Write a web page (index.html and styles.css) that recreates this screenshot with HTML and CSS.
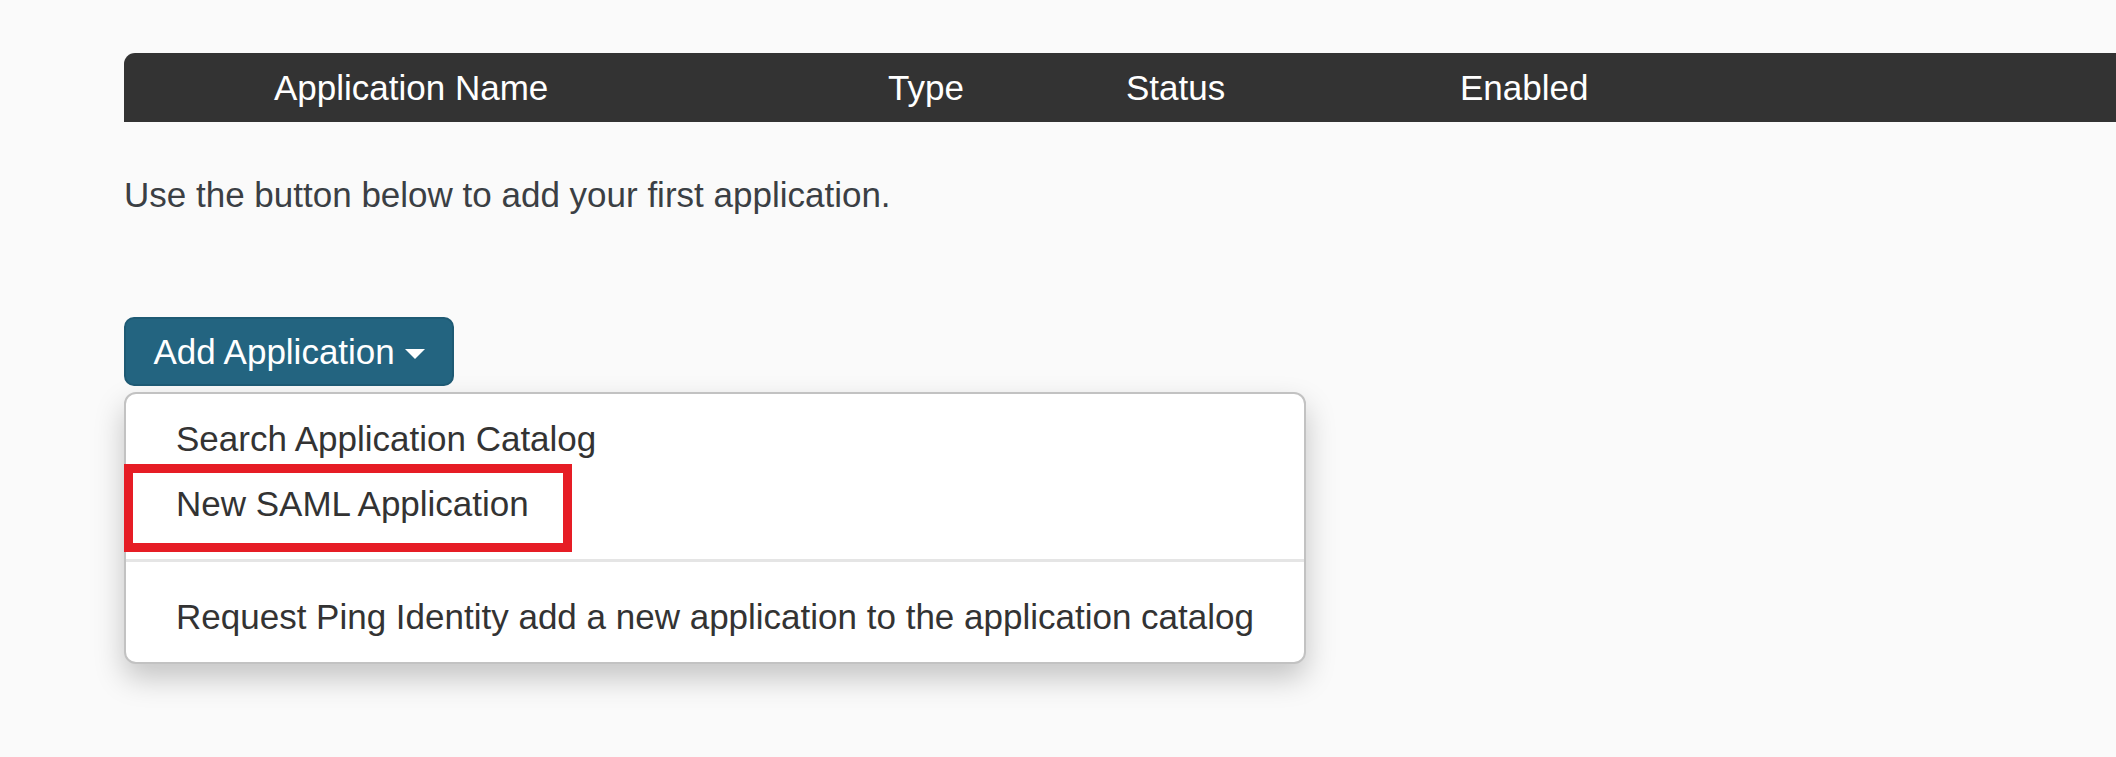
FILE: index.html
```html
<!DOCTYPE html>
<html lang="en">
<head>
    <meta charset="UTF-8">
    <meta name="viewport" content="width=device-width, initial-scale=1.0">
    <title>Applications</title>
    <link rel="stylesheet" href="styles.css">
</head>
<body>
    <div class="page">
        <!-- Applications table (empty) -->
        <div class="app-table">
            <div class="app-table-head">
                <span>Application Name</span>
                <span>Type</span>
                <span>Status</span>
                <span>Enabled</span>
            </div>
        </div>

        <p class="empty-note">Use the button below to add your first application.</p>

        <div class="add-app">
            <button class="add-btn" type="button">Add Application<span class="caret"></span></button>
            <ul class="add-menu">
                <li><a href="#">Search Application Catalog</a></li>
                <li class="marked"><a href="#">New SAML Application</a></li>
                <li class="divider"></li>
                <li><a href="#">Request Ping Identity add a new application to the application catalog</a></li>
            </ul>
        </div>
    </div>
</body>
</html>
```

FILE: styles.css
```css
*,
*::before,
*::after {
    margin: 0;
    padding: 0;
    box-sizing: border-box;
}

html,
body {
    min-height: 100%;
}

body {
    background: #fafafa;
    font-family: 'Liberation Sans', Arial, Helvetica, sans-serif;
    font-size: 35px;
    line-height: 50px;
    color: #333;
}

.page {
    padding: 53px 0 90px 124px;
}

.app-table-head {
    display: grid;
    grid-template-columns: 614px 238px 334px 1fr;
    padding-left: 150px;
    height: 69px;
    line-height: 69px;
    background: #333;
    color: #fff;
    border-top-left-radius: 11px;
}

.empty-note {
    margin-top: 48px;
    color: #3b3f44;
}

.add-app {
    margin-top: 97px;
}

.add-btn {
    display: inline-block;
    padding: 7.5px 27.5px;
    font: inherit;
    color: #fff;
    background: #236480;
    border: 2.5px solid #1e5a74;
    border-radius: 10px;
    cursor: pointer;
}

.caret {
    display: inline-block;
    margin-left: 10px;
    vertical-align: middle;
    border-top: 10px solid #fff;
    border-left: 10px solid transparent;
    border-right: 10px solid transparent;
}

.add-menu {
    list-style: none;
    width: max-content;
    margin-top: 6px;
    padding: 12.5px 0;
    background: #fff;
    border: 2.5px solid #c2c2c2;
    border-radius: 12px;
    box-shadow: 0 14px 30px rgba(0, 0, 0, 0.22);
}

.add-menu li a {
    display: block;
    padding: 7.5px 50px;
    color: #333;
    text-decoration: none;
    white-space: nowrap;
}

.add-menu .divider {
    height: 2.5px;
    margin: 22.5px 0;
    background: #e5e5e5;
}

.add-menu .marked {
    position: relative;
}

/* red highlight box drawn over the item */
.add-menu .marked::after {
    content: '';
    position: absolute;
    top: -8px;
    left: -2px;
    width: 448px;
    height: 88px;
    border: 9px solid #e61d25;
    pointer-events: none;
}
```
